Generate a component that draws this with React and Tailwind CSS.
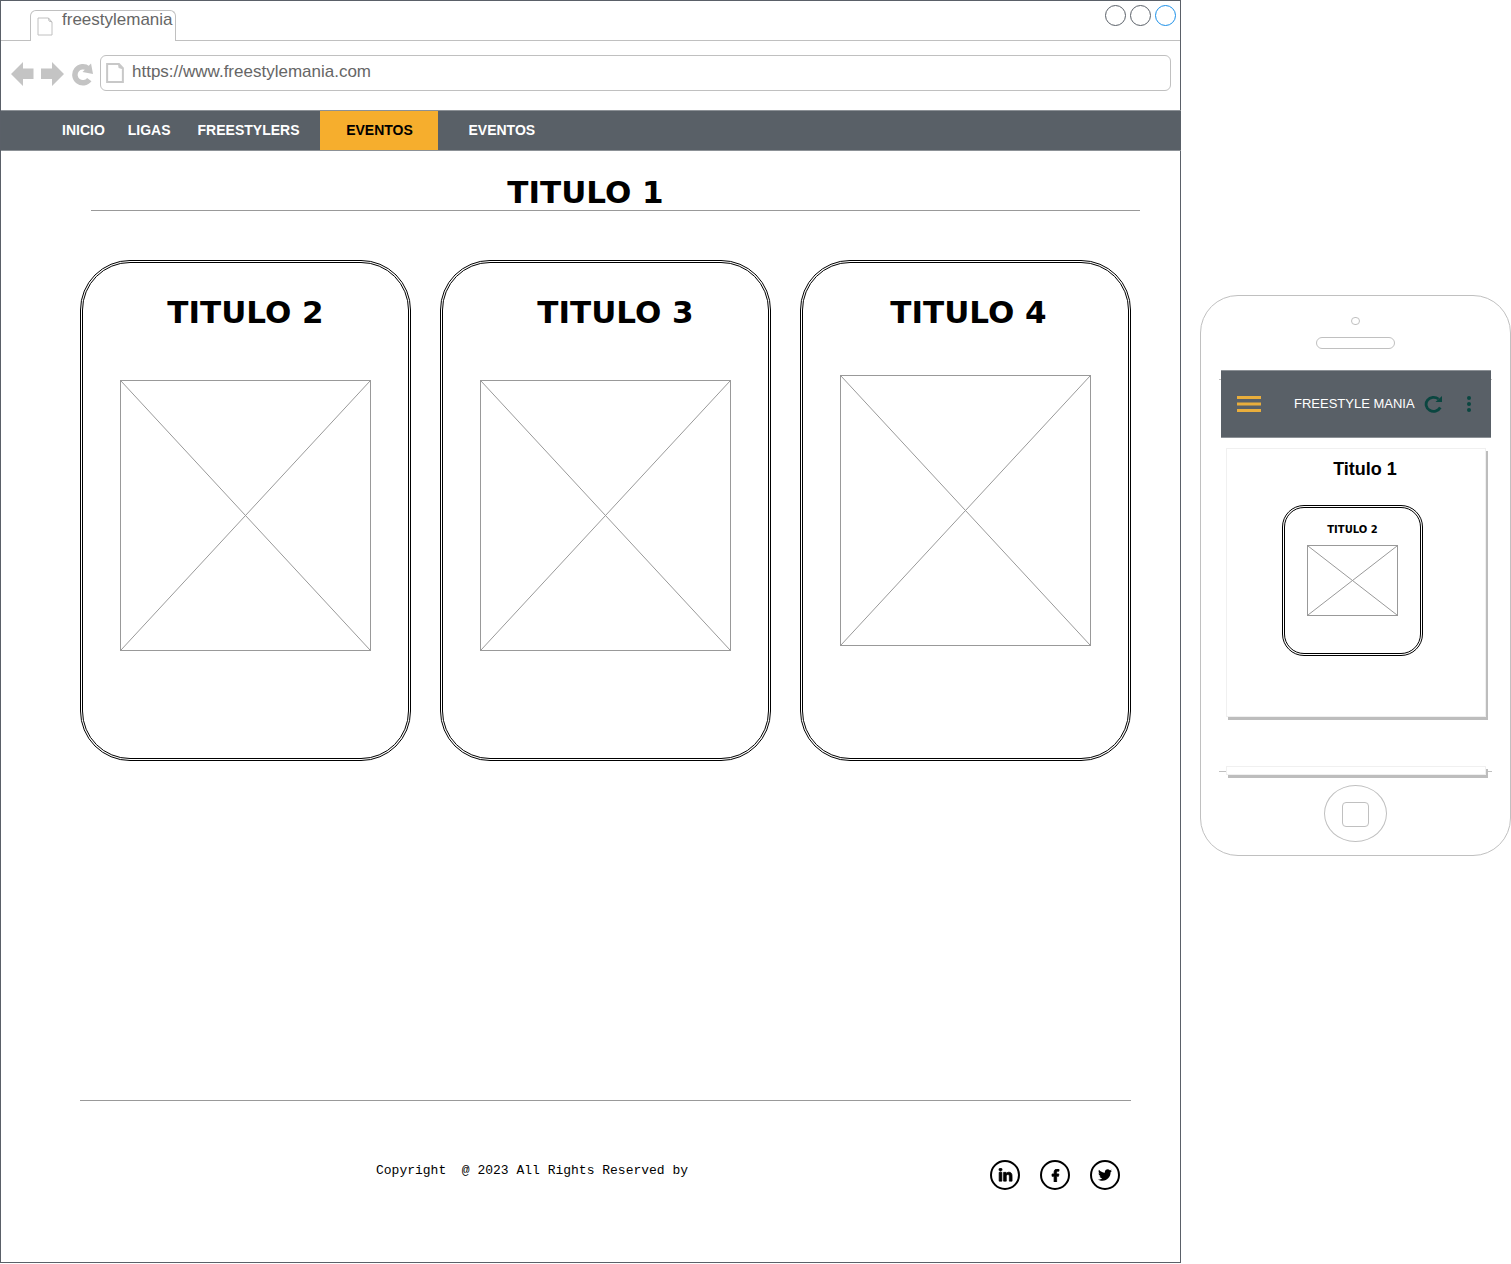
import { FaLinkedinIn, FaFacebookF, FaTwitter } from "react-icons/fa";

function PageIcon({ className }) {
  return (
    <svg viewBox="0 0 16 19" fill="none" stroke="currentColor" preserveAspectRatio="none" className={className} aria-hidden="true">
      <path d="M1 1H11.500L15 5V18H1Z M11.500 1L12 4L15 5" vectorEffect="non-scaling-stroke" />
    </svg>
  );
}

function ImagePlaceholder({ className }) {
  return (
    <div className={"border border-[#999] " + className}>
      <svg viewBox="0 0 100 100" preserveAspectRatio="none" className="block h-full w-full" stroke="#999" role="img" aria-label="Imagen">
        <path d="M0 0L100 100M100 0L0 100" vectorEffect="non-scaling-stroke" />
      </svg>
    </div>
  );
}

function Browser() {
  return (
    <div className="flex min-w-0 flex-1 flex-col border border-[#5a6068]">
      <div className="flex h-10 items-end justify-between border-b border-[#c0c0c0]">
        <div className="-mb-px ml-[29px] flex h-[31px] w-[146px] rounded-t-md border border-b-0 border-[#c0c0c0] bg-white text-[#666]">
          <PageIcon className="mt-1.5 ml-1.5 h-[19px] w-4 shrink-0 text-[#c0c0c0]" />
          <span className="ml-[9px] text-[17px] leading-[18px]">freestylemania</span>
        </div>
        <div className="mr-1 mb-3.5 flex gap-1">
          <button aria-label="Minimizar" className="size-[21px] rounded-full border border-[#5a6068]" />
          <button aria-label="Maximizar" className="size-[21px] rounded-full border border-[#5a6068]" />
          <button aria-label="Cerrar" className="size-[21px] rounded-full border border-[#1a8fe8]" />
        </div>
      </div>

      <div className="flex items-center pt-3.5 pr-[9px] pb-[19px] pl-2.5 text-[#c4c4c4]">
        <div className="flex pt-0.5">
          <button aria-label="Atrás">
            <svg className="block h-6 w-[23px]" viewBox="0 0 23 24" fill="currentColor"><path d="M0 12L12 0V6.500H22.500V17H12V24Z" /></svg>
          </button>
          <button aria-label="Adelante" className="ml-[7px]">
            <svg className="block h-6 w-[23px]" viewBox="0 0 23 24" fill="currentColor"><path d="M23 12L11 0V6.500H0V17H11V24Z" /></svg>
          </button>
          <button aria-label="Recargar" className="ml-[7px]">
            <svg className="block h-6 w-[23px]" viewBox="0 0 23 24"><path d="M18.300 17.600A8 8 0 1 1 17 6.600" fill="none" stroke="currentColor" strokeWidth="5.500" /><path d="M20 1.500L22 12L11.500 10Z" fill="currentColor" /></svg>
          </button>
        </div>
        <label className="ml-1.5 flex h-9 flex-1 items-center rounded-md border border-[#c0c0c0] pl-[5px]">
          <PageIcon className="h-5 w-[18px] stroke-2 text-[#c8c8c8]" />
          <input aria-label="Dirección" defaultValue="https://www.freestylemania.com" className="-mt-0.5 ml-2 min-w-0 flex-1 text-[17px] text-[#666] outline-none" />
        </label>
      </div>

      <nav className="-mr-px flex h-[41px] items-stretch border-y border-[#8c9196] bg-[#596067] text-sm leading-[38px] font-bold text-white">
        <a href="#inicio" className="ml-[61px]">INICIO</a>
        <a href="#ligas" className="ml-[23px]">LIGAS</a>
        <a href="#freestylers" className="ml-[27px]">FREESTYLERS</a>
        <a href="#eventos" className="ml-[21px] w-[118px] bg-[#f6ae2d] text-center text-black">EVENTOS</a>
        <a href="#eventos-2" className="ml-[30px]">EVENTOS</a>
      </nav>

      <main className="flex-1 font-['DejaVu_Sans',Verdana,sans-serif] font-bold text-black">
        <h1 className="mr-10 ml-[90px] border-b border-[#999] pt-[23px] pr-[60px] text-center text-[31px] leading-9">TITULO 1</h1>
        <div className="mt-[49px] mr-[49px] ml-[79px] grid grid-cols-3 gap-[29px] text-center text-[31px] leading-9">
          <section className="min-h-[501px] rounded-[50px] border-3 border-double border-black px-[37px] pt-[31px]">
            <h2>TITULO 2</h2>
            <ImagePlaceholder className="mt-[50px] h-[271px]" />
          </section>
          <section className="min-h-[501px] rounded-[50px] border-3 border-double border-black px-[37px] pt-[31px]">
            <h2 className="pl-5">TITULO 3</h2>
            <ImagePlaceholder className="mt-[50px] h-[271px]" />
          </section>
          <section className="min-h-[501px] rounded-[50px] border-3 border-double border-black px-[37px] pt-[31px]">
            <h2 className="pl-1.5">TITULO 4</h2>
            <ImagePlaceholder className="mt-[45px] h-[271px]" />
          </section>
        </div>
      </main>

      <footer className="mr-[49px] ml-[79px] flex items-center justify-between border-t border-[#999] pt-[59px] pr-[11px] pb-[72px] pl-[296px] text-black">
        <p className="pb-2 font-['Liberation_Mono',monospace] text-[13px] whitespace-pre">Copyright  @ 2023 All Rights Reserved by</p>
        <div className="flex gap-5">
          <a href="#linkedin" aria-label="LinkedIn" className="grid size-[30px] place-items-center rounded-full border-2 border-black"><FaLinkedinIn size={15} stroke="black" strokeWidth={24} /></a>
          <a href="#facebook" aria-label="Facebook" className="grid size-[30px] place-items-center rounded-full border-2 border-black"><FaFacebookF size={13} stroke="black" strokeWidth={30} /></a>
          <a href="#twitter" aria-label="Twitter" className="grid size-[30px] place-items-center rounded-full border-2 border-black"><FaTwitter size={14} /></a>
        </div>
      </footer>
    </div>
  );
}

function Phone() {
  return (
    <aside className="mt-[295px] ml-[19px] flex w-[311px] shrink-0 flex-col items-center self-start rounded-[38px] border border-[#c0c0c0] pt-[21px] pb-[13px]">
      <div className="h-2 w-[9px] rounded-full border border-[#c0c0c0]" />
      <div className="mt-3 h-3 w-[79px] rounded-full border border-[#c0c0c0]" />
      <div className="mt-[30px] w-[273px] border-y border-[#c0c0c0]">
        <header className="-mt-2.5 mr-px ml-0.5 flex h-[68px] items-center border-y border-[#8c9196] bg-[#596067] pr-5 pl-4">
          <button aria-label="Menú">
            <svg className="block h-4 w-6" viewBox="0 0 24 16" fill="#e9ae3c"><path d="M0 0H24V3H0ZM0 6.500H24V9.500H0ZM0 13H24V16H0Z" /></svg>
          </button>
          <span className="ml-[33px] flex-1 text-[13px] whitespace-nowrap text-white">FREESTYLE MANIA</span>
          <button aria-label="Actualizar" className="mr-6">
            <svg className="block h-[18px] w-[19px]" viewBox="0 0 19 18"><path d="M16.300 12.500A7.500 7 0 1 1 14.500 4" fill="none" stroke="#0a4640" strokeWidth="2.800" /><path d="M18 1V7H11.500Z" fill="#0a4640" /></svg>
          </button>
          <button aria-label="Más opciones">
            <svg className="block h-4 w-1" viewBox="0 0 4 16" fill="#0a4640"><circle cx="2" cy="2" r="2" /><circle cx="2" cy="8" r="2" /><circle cx="2" cy="14" r="2" /></svg>
          </button>
        </header>
        <section className="mt-2.5 mr-1.5 ml-[7px] flex min-h-[269px] flex-col items-center border border-[#f0f0f0] bg-white pr-[7px] text-black shadow-[2px_3px_0_#bdbdbd]">
          <h2 className="mt-2 pl-[25px] text-lg leading-6 font-bold">Titulo 1</h2>
          <div className="mt-6 min-h-[151px] w-[141px] rounded-[22px] border-3 border-double border-black px-[22px] pt-3 text-center font-['DejaVu_Sans',Verdana,sans-serif] text-[10px] leading-5 font-bold">
            <h3>TITULO 2</h3>
            <ImagePlaceholder className="mt-[5px] h-[71px]" />
          </div>
        </section>
        <div className="mt-[49px] mr-1.5 -mb-1 ml-[7px] h-[9px] border border-[#f0f0f0] bg-white shadow-[2px_3px_0_#bdbdbd]" />
      </div>
      <button aria-label="Inicio" className="mt-[13px] grid h-[57px] w-[63px] place-items-center rounded-[50%] border border-[#c0c0c0]">
        <span className="mt-px h-[25px] w-[27px] rounded border border-[#c0c0c0]" />
      </button>
    </aside>
  );
}

export default function App() {
  return (
    <div className="flex min-h-screen bg-white pb-px font-['Liberation_Sans',Arial,sans-serif]">
      <Browser />
      <Phone />
    </div>
  );
}
